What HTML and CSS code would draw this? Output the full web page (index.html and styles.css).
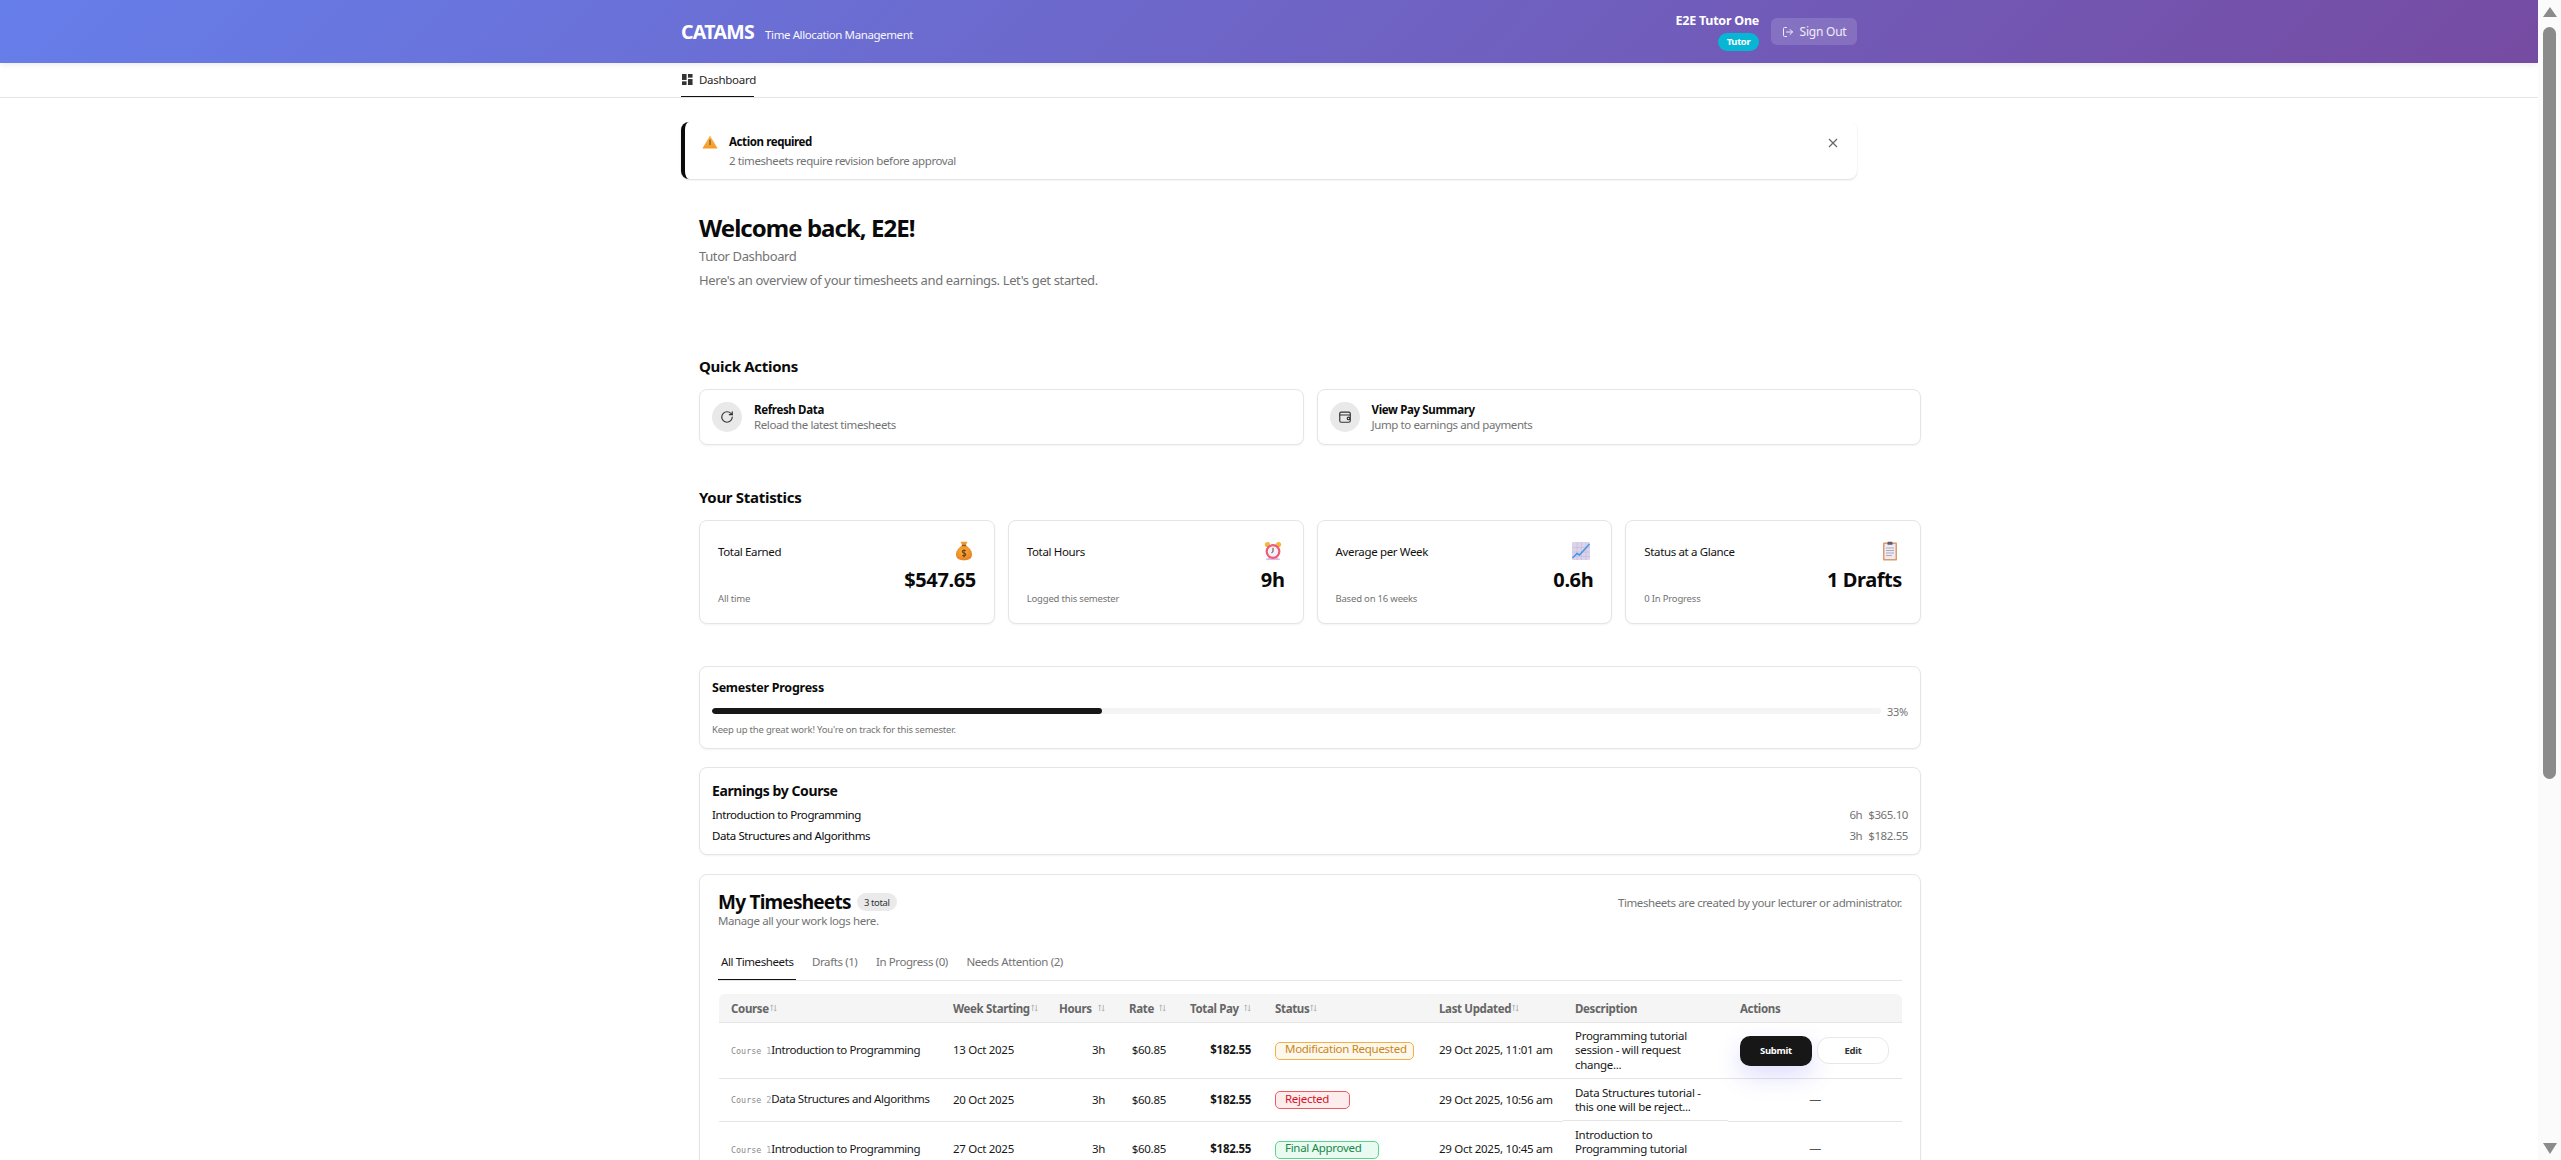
FILE: index.html
```html
<!DOCTYPE html>
<html lang="en">
<head>
<meta charset="utf-8">
<title>CATAMS</title>
<link rel="stylesheet" href="styles.css">
</head>
<body>
<div class="page">
  <header class="topbar">
    <div class="wrap topbar-in">
      <div class="brand"><span class="logo">CATAMS</span><span class="tagline">Time Allocation Management</span></div>
      <div class="user">
        <div class="user-info"><span class="user-name">E2E Tutor One</span><span class="role">Tutor</span></div>
        <button class="signout">
          <svg class="ico-signout" viewBox="0 0 24 24"><path d="M9 21H5a2 2 0 0 1-2-2V5a2 2 0 0 1 2-2h4"/><path d="m16 17 5-5-5-5"/><path d="M21 12H9"/></svg>
          Sign Out
        </button>
      </div>
    </div>
  </header>
  <nav class="nav">
    <div class="wrap">
      <a class="nav-item">
        <svg class="ico-dash" viewBox="0 0 12 12"><rect x="0" y="0" width="5" height="6.500"/><rect x="6.500" y="0" width="5" height="4"/><rect x="6.500" y="5.500" width="5" height="6.500"/><rect x="0" y="8" width="5" height="4"/></svg>
        Dashboard
      </a>
    </div>
  </nav>
  <main class="wrap">
    <section class="alert">
      <svg class="ico-warn" viewBox="0 0 16 14"><defs><linearGradient id="w" x1="0" y1="0" x2="0" y2="1"><stop offset="0" stop-color="#f9b94f"/><stop offset="1" stop-color="#f59a23"/></linearGradient></defs><path d="M8 .6 15.6 13.600H.4z" fill="url(#w)"/><path d="M8 4.500v5.500" stroke="#5c4326" stroke-width="1"/></svg>
      <div class="alert-body"><div class="alert-title">Action required</div><div class="alert-text">2 timesheets require revision before approval</div></div>
      <svg class="ico-x" viewBox="0 0 10 10"><path d="M1 1l8 8M9 1l-8 8"/></svg>
    </section>
    <div class="dash">
      <h1 class="welcome">Welcome back, E2E!</h1>
      <p class="role-line">Tutor Dashboard</p>
      <p class="intro">Here's an overview of your timesheets and earnings. Let's get started.</p>

      <h2 class="section-title first">Quick Actions</h2>
      <div class="actions">
        <div class="card action">
          <span class="action-ico"><svg viewBox="0 0 24 24"><path d="M21 12a9 9 0 1 1-9-9c2.520 0 4.930 1 6.740 2.740L21 8"/><path d="M21 3v5h-5"/></svg></span>
          <div><div class="action-title">Refresh Data</div><div class="action-sub">Reload the latest timesheets</div></div>
        </div>
        <div class="card action">
          <span class="action-ico"><svg viewBox="0 0 24 24"><rect x="3" y="3.500" width="18" height="17.500" rx="2.500"/><path d="M3 8.500h18"/><circle cx="18" cy="14.500" r="2.200"/></svg></span>
          <div><div class="action-title">View Pay Summary</div><div class="action-sub">Jump to earnings and payments</div></div>
        </div>
      </div>

      <h2 class="section-title">Your Statistics</h2>
      <div class="stats">
        <div class="card stat">
          <div class="stat-top"><span class="stat-label">Total Earned</span>
            <svg class="emoji" viewBox="0 0 20 20"><defs><radialGradient id="bag" cx=".45" cy=".4" r=".65"><stop offset="0" stop-color="#fbb136"/><stop offset="1" stop-color="#e67e26"/></radialGradient></defs><path d="M6.500 .8h7l-1.800 3.400H8.300z" fill="#ee9a2c"/><path d="M7.800 4.800h4.400c3.300 2 5.800 5.200 5.800 8.600 0 4.200-3.500 5.800-8 5.800s-8-1.600-8-5.800c0-3.400 2.500-6.600 5.800-8.600z" fill="url(#bag)"/><rect x="7.800" y="3.800" width="4.400" height="1.300" fill="#8a5a26"/><path d="M11.800 9.800c-1-.9-3.500-.7-3.500.8 0 1.900 3.500 1 3.500 3 0 1.500-2.400 1.700-3.600.8M10 8.200v8" stroke="#6d4218" stroke-width="1.100" fill="none"/></svg>
          </div>
          <div class="stat-value">$547.65</div>
          <div class="stat-sub">All time</div>
        </div>
        <div class="card stat">
          <div class="stat-top"><span class="stat-label">Total Hours</span>
            <svg class="emoji" viewBox="0 0 20 20"><circle cx="4.500" cy="3.500" r="2.600" fill="#f4b73c"/><circle cx="15.500" cy="3.500" r="2.600" fill="#f4b73c"/><path d="M5 19l2-3M15 19l-2-3" stroke="#d8b6e0" stroke-width="1.600"/><rect x="3" y="17.600" width="14" height="1.400" rx=".7" fill="#d9bce4"/><circle cx="10" cy="10.500" r="7.400" fill="#ee5a78"/><circle cx="10" cy="10.500" r="5.200" fill="#f5f1f4"/><path d="M10 6.800v4l-1.600 1" stroke="#4c4650" stroke-width="1" fill="none"/></svg>
          </div>
          <div class="stat-value">9h</div>
          <div class="stat-sub">Logged this semester</div>
        </div>
        <div class="card stat">
          <div class="stat-top"><span class="stat-label">Average per Week</span>
            <svg class="emoji" viewBox="0 0 20 20"><rect x="1" y="1" width="18" height="18" rx="1" fill="#dcd3ea"/><path d="M1 6.500h18M1 11h18M1 15.500h18M6 1v18M10.500 1v18M15 1v18" stroke="#c5bbd8" stroke-width=".6"/><path d="M1.500 17 6 12.500l2.500 1.500L18.500 3" stroke="#3f97e8" stroke-width="1.500" fill="none"/></svg>
          </div>
          <div class="stat-value">0.6h</div>
          <div class="stat-sub">Based on 16 weeks</div>
        </div>
        <div class="card stat">
          <div class="stat-top"><span class="stat-label">Status at a Glance</span>
            <svg class="emoji" viewBox="0 0 20 20"><rect x="3" y="1.500" width="14" height="18" rx=".8" fill="#dd9a6b"/><rect x="4.500" y="3" width="11" height="15" fill="#efe9f3"/><rect x="7.500" y=".8" width="5" height="3" rx=".6" fill="#5d5a70"/><path d="M6 7h8M6 9.500h8M6 12h8M6 14.500h6" stroke="#a7a3b5" stroke-width=".9"/></svg>
          </div>
          <div class="stat-value">1 Drafts</div>
          <div class="stat-sub">0 In Progress</div>
        </div>
      </div>

      <section class="card progress">
        <h3 class="progress-title">Semester Progress</h3>
        <div class="progress-row"><div class="track"><div class="fill" style="width:33.33%"></div></div><span class="progress-pct">33%</span></div>
        <p class="progress-hint">Keep up the great work! You're on track for this semester.</p>
      </section>

      <section class="card earnings">
        <h3 class="earnings-title">Earnings by Course</h3>
        <div class="earn-row"><span>Introduction to Programming</span><span class="earn-val"><span>6h</span><span>$365.10</span></span></div>
        <div class="earn-row"><span>Data Structures and Algorithms</span><span class="earn-val"><span>3h</span><span>$182.55</span></span></div>
      </section>

      <section class="card sheets">
        <div class="sheets-head">
          <div>
            <div class="sheets-title-row"><h2 class="sheets-title">My Timesheets</h2><span class="count">3 total</span></div>
            <p class="sheets-sub">Manage all your work logs here.</p>
          </div>
          <p class="sheets-note">Timesheets are created by your lecturer or administrator.</p>
        </div>
        <div class="tabs">
          <span class="tab active">All Timesheets</span>
          <span class="tab">Drafts (1)</span>
          <span class="tab">In Progress (0)</span>
          <span class="tab">Needs Attention (2)</span>
        </div>
        <table class="table">
          <colgroup><col class="c1"><col class="c2"><col class="c3"><col class="c4"><col class="c5"><col class="c6"><col class="c7"><col class="c8"><col class="c9"></colgroup>
          <thead>
            <tr>
              <th><span class="th-in">Course<svg class="sort" viewBox="0 0 8 9"><path d="M2 8V1M.5 2.500 2 1l1.500 1.500M6 1v7M4.500 6.500 6 8l1.500-1.500"/></svg></span></th>
              <th><span class="th-in">Week Starting<svg class="sort" viewBox="0 0 8 9"><path d="M2 8V1M.5 2.500 2 1l1.500 1.500M6 1v7M4.500 6.500 6 8l1.500-1.500"/></svg></span></th>
              <th><span class="th-in wide">Hours<svg class="sort" viewBox="0 0 8 9"><path d="M2 8V1M.5 2.500 2 1l1.500 1.500M6 1v7M4.500 6.500 6 8l1.500-1.500"/></svg></span></th>
              <th><span class="th-in wide">Rate<svg class="sort" viewBox="0 0 8 9"><path d="M2 8V1M.5 2.500 2 1l1.500 1.500M6 1v7M4.500 6.500 6 8l1.500-1.500"/></svg></span></th>
              <th><span class="th-in wide">Total Pay<svg class="sort" viewBox="0 0 8 9"><path d="M2 8V1M.5 2.500 2 1l1.500 1.500M6 1v7M4.500 6.500 6 8l1.500-1.500"/></svg></span></th>
              <th><span class="th-in">Status<svg class="sort" viewBox="0 0 8 9"><path d="M2 8V1M.5 2.500 2 1l1.500 1.500M6 1v7M4.500 6.500 6 8l1.500-1.500"/></svg></span></th>
              <th><span class="th-in">Last Updated<svg class="sort" viewBox="0 0 8 9"><path d="M2 8V1M.5 2.500 2 1l1.500 1.500M6 1v7M4.500 6.500 6 8l1.500-1.500"/></svg></span></th>
              <th>Description</th>
              <th>Actions</th>
            </tr>
          </thead>
          <tbody>
            <tr class="r1">
              <td class="course"><span class="code">Course <i>1</i></span>Introduction to Programming</td>
              <td>13 Oct 2025</td><td class="num">3h</td><td class="num">$60.85</td><td class="num pay">$182.55</td>
              <td><span class="badge b-mod">Modification Requested</span></td>
              <td>29 Oct 2025, 11:01 am</td>
              <td class="desc">Programming tutorial session - will request change...</td>
              <td><div class="btns"><button class="btn-submit">Submit</button><button class="btn-edit">Edit</button></div></td>
            </tr>
            <tr class="r2">
              <td class="course"><span class="code">Course <i>2</i></span>Data Structures and Algorithms</td>
              <td>20 Oct 2025</td><td class="num">3h</td><td class="num">$60.85</td><td class="num pay">$182.55</td>
              <td><span class="badge b-rej">Rejected</span></td>
              <td>29 Oct 2025, 10:56 am</td>
              <td class="desc">Data Structures tutorial - this one will be reject...</td>
              <td class="none">—</td>
            </tr>
            <tr class="r3">
              <td class="course"><span class="code">Course <i>1</i></span>Introduction to Programming</td>
              <td>27 Oct 2025</td><td class="num">3h</td><td class="num">$60.85</td><td class="num pay">$182.55</td>
              <td><span class="badge b-ok">Final Approved</span></td>
              <td>29 Oct 2025, 10:45 am</td>
              <td class="desc">Introduction to Programming tutorial session...</td>
              <td class="none">—</td>
            </tr>
          </tbody>
        </table>
      </section>
    </div>
  </main>
</div>
<aside class="scrollbar">
  <span class="arrow-up"></span>
  <span class="thumb"></span>
  <span class="arrow-down"></span>
</aside>
</body>
</html>
```

FILE: styles.css
```css
* { box-sizing: border-box; }
html, body { height: 100%; }
body {
  margin: 0;
  display: flex;
  height: 100vh;
  overflow: hidden;
  background: #fff;
  color: #0a0a0a;
  font-family: "Noto Sans", "Liberation Sans", sans-serif;
  font-size: 11.500px;
  letter-spacing: -0.035em;
}
h1, h2, h3, p { margin: 0; }
button { font-family: inherit; letter-spacing: inherit; cursor: pointer; }

.page { flex: 1; min-width: 0; overflow: hidden; }
.wrap { width: 1176px; margin: 0 auto; }

.scrollbar {
  width: 23px;
  flex: none;
  background: #fbfbfb;
  display: flex;
  flex-direction: column;
  align-items: center;
}
.arrow-up { margin-top: 7px; width: 0; height: 0; border-left: 7px solid transparent; border-right: 7px solid transparent; border-bottom: 10px solid #8b8b8b; }
.thumb { margin-top: 10px; width: 13px; height: 752px; background: #8b8b8b; border-radius: 7px; }
.arrow-down { margin-top: auto; margin-bottom: 6px; width: 0; height: 0; border-left: 7px solid transparent; border-right: 7px solid transparent; border-top: 11px solid #8b8b8b; }

.topbar { height: 63px; background: linear-gradient(135deg, #667eea 0%, #764ba2 100%); box-shadow: 0 2px 6px rgba(0,0,0,.08); position: relative; color: #fff; }
.topbar-in { height: 100%; display: flex; align-items: center; justify-content: space-between; }
.brand { display: flex; align-items: baseline; gap: 11px; }
.logo { font-size: 19.500px; font-weight: 700; letter-spacing: -0.035em; line-height: 26px; }
.tagline { font-size: 11.500px; opacity: .95; }
.user { display: flex; align-items: center; gap: 12px; }
.user-info { display: flex; flex-direction: column; align-items: flex-end; gap: 4px; }
.user-name { font-size: 12.500px; font-weight: 700; line-height: 16px; letter-spacing: -0.02em; }
.role { height: 18px; width: 41px; background: #06b6d4; border-radius: 9px; font-size: 9.500px; font-weight: 700; display: flex; align-items: center; justify-content: center; }
.signout { width: 86px; height: 27px; border: 0; border-radius: 6px; background: rgba(255,255,255,.14); color: #f1edf8; font-size: 12px; letter-spacing: -0.02em; display: flex; align-items: center; justify-content: center; gap: 6px; padding: 0; }
.ico-signout { width: 12px; height: 12px; fill: none; stroke: currentColor; stroke-width: 2; stroke-linecap: round; stroke-linejoin: round; }

.nav { height: 35px; border-bottom: 1px solid #e5e5e5; }
.nav-item { display: inline-flex; align-items: center; gap: 6px; height: 34px; width: 73px; border-bottom: 1px solid #111; font-size: 11.500px; letter-spacing: -0.025em; color: #262626; padding-bottom: 1px; white-space: nowrap; }
.ico-dash { width: 11px; height: 11px; fill: #333; margin-left: 1px; flex: none; }

.alert { margin-top: 24px; height: 57px; border-left: 4px solid #0a0a0a; border-radius: 8px; background: #fff; box-shadow: 0 1px 2px rgba(0,0,0,.14); display: flex; align-items: flex-start; padding: 12px 19px 0 17px; }
.ico-warn { width: 16px; height: 14px; margin-top: 1px; margin-right: 11px; flex: none; }
.alert-body { flex: 1; margin-top: -1px; }
.alert-title { font-weight: 700; line-height: 18px; }
.alert-text { color: #737373; line-height: 19px; }
.ico-x { width: 10px; height: 10px; stroke: #666; stroke-width: 1.200; fill: none; margin-top: 4px; }

.dash { width: 1222px; margin-left: 18px; }
.welcome { margin-top: 33px; font-size: 24px; line-height: 32px; font-weight: 700; color: #0a0a0a; letter-spacing: -.04em; }
.role-line { margin-top: 2px; font-size: 13px; line-height: 20px; letter-spacing: -.03em; color: #737373; }
.intro { margin-top: 4px; font-size: 13px; line-height: 20px; letter-spacing: -.028em; color: #737373; }

.section-title { margin-top: 41px; font-size: 15px; line-height: 22px; font-weight: 700; margin-bottom: 12px; letter-spacing: -.02em; }
.section-title.first { margin-top: 65px; }

.card { background: #fff; border: 1px solid #e5e5e5; border-radius: 8px; box-shadow: 0 1px 2px rgba(0,0,0,.05); }

.actions { display: grid; grid-template-columns: 1fr 1fr; gap: 13px; }
.action { height: 56px; display: flex; align-items: center; gap: 12px; padding: 0 12px; }
.action-ico { width: 30px; height: 30px; border-radius: 50%; background: #e9e9e9; display: flex; align-items: center; justify-content: center; flex: none; }
.action-ico svg { width: 14px; height: 14px; fill: none; stroke: #333; stroke-width: 2; stroke-linecap: round; stroke-linejoin: round; }
.action-title { font-weight: 700; line-height: 15px; letter-spacing: -.03em; }
.action-sub { color: #737373; line-height: 15px; }

.stats { display: grid; grid-template-columns: repeat(4, 1fr); gap: 13px; }
.stat { height: 104px; padding: 20px 18px 0 18px; display: flex; flex-direction: column; }
.stat-top { display: flex; justify-content: space-between; height: 20px; align-items: center; }
.stat-label { font-size: 11.500px; color: #111; letter-spacing: -.03em; }
.emoji { width: 20px; height: 20px; flex: none; margin-right: 2px; }
.stat-value { text-align: right; font-size: 20px; line-height: 24px; font-weight: 700; margin-top: 7px; letter-spacing: -.02em; }
.stat-sub { font-size: 9.500px; line-height: 14px; color: #737373; letter-spacing: -.02em; }

.progress { margin-top: 42px; height: 83px; padding: 12px 12px 0 12px; }
.progress-title { font-size: 12.500px; line-height: 18px; font-weight: 700; letter-spacing: -.02em; }
.progress-row { display: flex; align-items: center; gap: 6px; margin-top: 8px; height: 12px; }
.track { flex: 1; height: 6px; border-radius: 3px; background: #f4f4f4; overflow: hidden; }
.fill { height: 100%; background: #171717; border-radius: 3px; }
.progress-pct { color: #737373; font-size: 11px; letter-spacing: -.02em; }
.progress-hint { margin-top: 6px; font-size: 9.500px; line-height: 14px; color: #737373; letter-spacing: -.02em; }

.earnings { margin-top: 18px; height: 88px; padding: 13px 12px 0 12px; }
.earnings-title { font-size: 14px; line-height: 20px; font-weight: 700; letter-spacing: -.03em; margin-bottom: 3px; }
.earn-row { display: flex; justify-content: space-between; line-height: 21px; }
.earn-val { display: flex; gap: 6px; color: #737373; }

.sheets { margin-top: 19px; padding: 13px 18px 0 18px; height: 400px; }
.sheets-head { display: flex; justify-content: space-between; align-items: flex-start; }
.sheets-title-row { display: flex; align-items: center; gap: 6px; height: 28px; }
.sheets-title { font-size: 19px; line-height: 28px; font-weight: 700; letter-spacing: -.04em; }
.count { width: 40px; height: 18px; border-radius: 9px; background: #eaeaea; font-size: 9.500px; display: flex; align-items: center; justify-content: center; color: #333; }
.sheets-sub { color: #737373; line-height: 12px; margin-top: -1px; }
.sheets-note { color: #737373; margin-top: 7px; }

.tabs { margin-top: 20px; height: 34px; width: 1184px; border-bottom: 1px solid #e5e5e5; display: flex; }
.tab { color: #737373; height: 33px; padding: 6px 3px 0 3px; margin-right: 12.500px; line-height: 18px; }
.tab.active { color: #171717; border-bottom: 1px solid #111; }

.table { border-collapse: separate; border-spacing: 0; margin-top: 13px; table-layout: fixed; width: 1183px; margin-left: 1px; }
.c1 { width: 222px; } .c2 { width: 106px; } .c3 { width: 70px; } .c4 { width: 61px; } .c5 { width: 85px; } .c6 { width: 164px; } .c7 { width: 136px; } .c8 { width: 165px; } .c9 { width: 174px; }
.table th { height: 29px; background: #f5f5f5; text-align: left; padding: 0 12px; font-weight: 700; color: #666; border-bottom: 1px solid #e5e5e5; white-space: nowrap; letter-spacing: -.03em; }
.table th:first-child { border-top-left-radius: 6px; }
.table th:last-child { border-top-right-radius: 6px; }
.th-in { display: inline-flex; align-items: center; }
.th-in.wide { display: flex; justify-content: space-between; }
.sort { width: 7px; height: 8px; fill: none; stroke: #aaa; stroke-width: .9; flex: none; margin-left: 1px; }
.table td { padding: 0 12px; line-height: 14.500px; border-bottom: 1px solid #e5e5e5; vertical-align: middle; color: #171717; white-space: nowrap; letter-spacing: -.025em; }
.r1 td { height: 56px; }
.r2 td { height: 43px; }
.r3 td { height: 56px; }
.table td.num { text-align: right; }
.table td.pay { font-weight: 700; }
.table td.desc { white-space: normal; }
.table td.course { letter-spacing: -.035em; }
.r2 .desc { border-bottom-color: #fff; box-shadow: inset 0 -1px #e5e5e5; }
.code { font-family: "DejaVu Sans Mono", "Liberation Mono", monospace; font-size: 8.400px; color: #8a8a8a; letter-spacing: 0; }
.code i { font-style: normal; color: #a5a5a5; }
.badge { display: inline-flex; align-items: center; height: 18px; padding: 0 9px 2px; border: 1px solid; border-radius: 5px; }
.b-mod { width: 139px; background: #fef7ec; border-color: #f1b144; color: #c98718; }
.b-rej { width: 75px; background: #fdecec; border-color: #ef5a5f; color: #d3122a; }
.b-ok { width: 104px; background: #e9faf0; border-color: #55d68c; color: #17894a; }
.btns { display: flex; align-items: center; gap: 5px; }
.btn-submit { width: 72px; height: 30px; border: 0; border-radius: 10px; background: #171717; color: #fff; font-size: 9.500px; font-weight: 700; box-shadow: 0 10px 24px rgba(99,102,241,.22); }
.btn-edit { width: 72px; height: 27px; border: 1px solid #e8e8e8; border-radius: 12px; background: #fff; color: #333; font-size: 9.500px; font-weight: 700; }
.table td.none { text-align: center; color: #555; font-size: 12px; }
```
